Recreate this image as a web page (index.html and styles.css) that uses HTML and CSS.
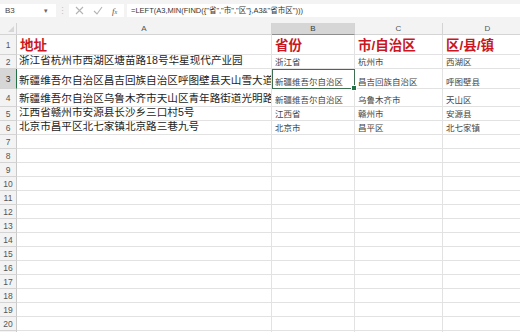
FILE: index.html
```html
<!DOCTYPE html>
<html lang="zh-CN">
<head>
  <meta charset="UTF-8">
  <title>地址拆分</title>
  <link rel="stylesheet" href="styles.css">
</head>
<body>
  <div class="formula-bar">
    <div class="name-box">B3</div>
    <span class="nb-arrow">▾</span>
    <span class="sep">⋮</span>
    <div class="fx-tools">
      <svg width="9" height="9" viewBox="0 0 9 9"><path d="M1 1L8 8M8 1L1 8" stroke="#b3b3b3" stroke-width="1.1" fill="none"/></svg>
      <svg width="10" height="9" viewBox="0 0 10 9"><path d="M1 5L4 8L9 1" stroke="#b3b3b3" stroke-width="1.1" fill="none"/></svg>
      <i class="fx">f<small>x</small></i>
    </div>
    <div class="formula">=LEFT(A3,MIN(FIND({"省","市","区"},A3&amp;"省市区")))</div>
  </div>

  <div class="sheet">
    <div class="corner"><span class="tri"></span></div>
    <div class="ch">A</div>
    <div class="ch active">B</div>
    <div class="ch">C</div>
    <div class="ch">D</div>

    <div class="rh">1</div>
    <div class="cell title">地址</div>
    <div class="cell title">省份</div>
    <div class="cell title">市/自治区</div>
    <div class="cell title">区/县/镇</div>

    <div class="rh">2</div>
    <div class="cell addr">浙江省杭州市西湖区塘苗路18号华星现代产业园</div>
    <div class="cell">浙江省</div>
    <div class="cell">杭州市</div>
    <div class="cell">西湖区</div>

    <div class="rh active">3</div>
    <div class="cell addr">新疆维吾尔自治区昌吉回族自治区呼图壁县天山雪大道</div>
    <div class="cell sel">新疆维吾尔自治区</div>
    <div class="cell">昌吉回族自治区</div>
    <div class="cell">呼图壁县</div>

    <div class="rh">4</div>
    <div class="cell addr">新疆维吾尔自治区乌鲁木齐市天山区青年路街道光明路</div>
    <div class="cell">新疆维吾尔自治区</div>
    <div class="cell">乌鲁木齐市</div>
    <div class="cell">天山区</div>

    <div class="rh">5</div>
    <div class="cell addr">江西省赣州市安源县长沙乡三口村5号</div>
    <div class="cell">江西省</div>
    <div class="cell">赣州市</div>
    <div class="cell">安源县</div>

    <div class="rh">6</div>
    <div class="cell addr">北京市昌平区北七家镇北京路三巷九号</div>
    <div class="cell">北京市</div>
    <div class="cell">昌平区</div>
    <div class="cell">北七家镇</div>

    <div class="rh">7</div><div class="cell"></div><div class="cell"></div><div class="cell"></div><div class="cell"></div>
    <div class="rh">8</div><div class="cell"></div><div class="cell"></div><div class="cell"></div><div class="cell"></div>
    <div class="rh">9</div><div class="cell"></div><div class="cell"></div><div class="cell"></div><div class="cell"></div>
    <div class="rh">10</div><div class="cell"></div><div class="cell"></div><div class="cell"></div><div class="cell"></div>
    <div class="rh">11</div><div class="cell"></div><div class="cell"></div><div class="cell"></div><div class="cell"></div>
    <div class="rh">12</div><div class="cell"></div><div class="cell"></div><div class="cell"></div><div class="cell"></div>
    <div class="rh">13</div><div class="cell"></div><div class="cell"></div><div class="cell"></div><div class="cell"></div>
    <div class="rh">14</div><div class="cell"></div><div class="cell"></div><div class="cell"></div><div class="cell"></div>
    <div class="rh">15</div><div class="cell"></div><div class="cell"></div><div class="cell"></div><div class="cell"></div>
    <div class="rh">16</div><div class="cell"></div><div class="cell"></div><div class="cell"></div><div class="cell"></div>
    <div class="rh">17</div><div class="cell"></div><div class="cell"></div><div class="cell"></div><div class="cell"></div>
    <div class="rh">18</div><div class="cell"></div><div class="cell"></div><div class="cell"></div><div class="cell"></div>
    <div class="rh">19</div><div class="cell"></div><div class="cell"></div><div class="cell"></div><div class="cell"></div>
    <div class="rh">20</div><div class="cell"></div><div class="cell"></div><div class="cell"></div><div class="cell"></div>
    <div class="rh"></div><div class="cell"></div><div class="cell"></div><div class="cell"></div><div class="cell"></div>
  </div>
</body>
</html>
```

FILE: styles.css
```css
:root {
  --grid-line: #e2e2e2;
  --head-bg: #f3f3f3;
  --head-line: #d4d4d4;
  --excel-green: #217346;
  --title-red: #c8171e;
}
* {
  box-sizing: border-box;
  margin: 0;
  padding: 0;
}
body {
  width: 520px;
  height: 332px;
  overflow: hidden;
  background: #fff;
  font-family: "Liberation Sans", "Noto Sans CJK SC", sans-serif;
  color: #222;
}

/* formula bar */
.formula-bar {
  height: 23px;
  background: #f3f3f3;
  display: flex;
  align-items: center;
  padding: 0 0 2px 0;
  font-size: 8px;
}
.name-box {
  width: 44px;
  height: 13px;
  line-height: 13px;
  padding-left: 5px;
  color: #444;
  background: #fff;
}
.nb-arrow {
  width: 12px;
  height: 13px;
  line-height: 13px;
  background: #fff;
  color: #666;
  font-size: 7px;
  text-align: left;
}
.sep {
  width: 13px;
  text-align: center;
  color: #c4c4c4;
  font-size: 9px;
}
.fx-tools {
  width: 55px;
  height: 13px;
  background: #fff;
  display: flex;
  align-items: center;
  gap: 9px;
  padding-left: 6px;
}
.fx {
  font-family: "Liberation Serif", serif;
  font-size: 9px;
  color: #555;
}
.fx small {
  font-size: 6px;
}
.formula {
  flex: 1;
  height: 13px;
  line-height: 13px;
  margin-left: 3px;
  padding-left: 4px;
  background: #fff;
  color: #333;
  font-size: 7.5px;
  white-space: nowrap;
  overflow: hidden;
}

/* sheet grid */
.sheet {
  display: grid;
  grid-template-columns: 17px 255px 83px 88px 90px;
  grid-template-rows: 12px 20px 14px 20px 18px 14px 14px repeat(15, 14px);
  width: 533px;
}
.corner {
  background: var(--head-bg);
  border-right: 1px solid var(--head-line);
  border-bottom: 1px solid var(--head-line);
  position: relative;
}
.corner .tri {
  position: absolute;
  right: 2px;
  bottom: 2px;
  width: 0;
  height: 0;
  border-left: 6px solid transparent;
  border-bottom: 6px solid #d7d7d7;
}
.ch {
  background: var(--head-bg);
  border-right: 1px solid var(--head-line);
  border-bottom: 1px solid var(--head-line);
  color: #555;
  font-size: 8px;
  text-align: center;
  line-height: 12px;
}
.ch.active {
  background: #d6d6d6;
  border-bottom: 1px solid #8e8e8e;
  color: #3c3c3c;
}
.rh {
  background: var(--head-bg);
  border-right: 1px solid #c9c9c9;
  border-bottom: 1px solid var(--head-line);
  color: #555;
  font-size: 8.5px;
  display: flex;
  align-items: center;
  justify-content: center;
}
.rh.active {
  background: #d6d6d6;
  border-right: 1px solid var(--excel-green);
  color: #2e2e2e;
}
.cell {
  border-right: 1px solid var(--grid-line);
  border-bottom: 1px solid var(--grid-line);
  display: flex;
  align-items: flex-end;
  padding: 0 2px 1px 3px;
  font-size: 8.5px;
  color: #444;
  white-space: nowrap;
  overflow: hidden;
}
.cell.addr {
  font-size: 10.6px;
  color: #1d1d1d;
  padding-left: 2px;
}
.cell.title {
  font-size: 13.5px;
  font-weight: bold;
  color: var(--title-red);
  padding-bottom: 0;
}
.cell.sel {
  position: relative;
  overflow: visible;
  outline: 1.5px solid #3f6f52;
  outline-offset: -1px;
}
.cell.sel::after {
  content: "";
  position: absolute;
  right: -3px;
  bottom: -3px;
  width: 4px;
  height: 4px;
  background: var(--excel-green);
  border: 1px solid #fff;
}
```
